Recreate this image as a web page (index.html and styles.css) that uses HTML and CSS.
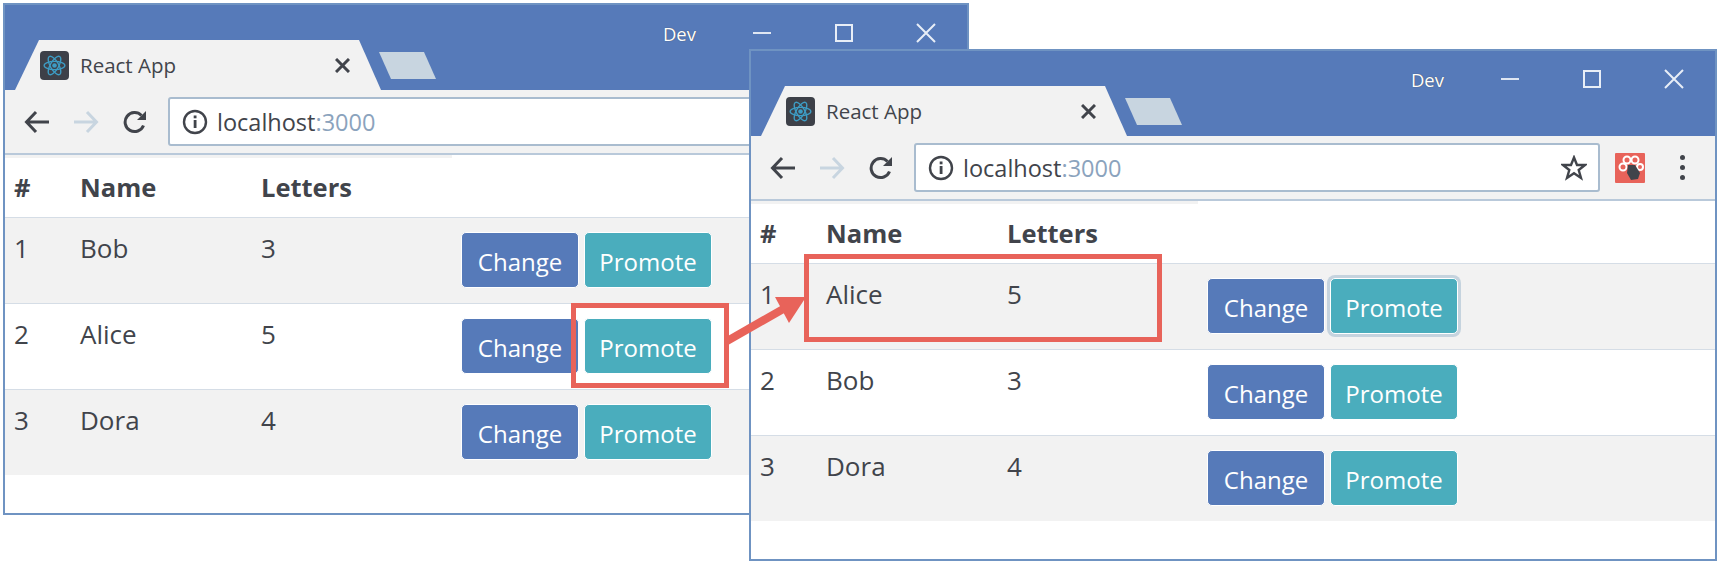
FILE: index.html
```html
<!DOCTYPE html>
<html lang="en">
<head>
    <meta charset="UTF-8">
    <title>React App</title>
    <link rel="stylesheet" href="styles.css">
</head>
<body>
    <!-- Shared icons -->
    <svg class="icon-defs" width="0" height="0">
        <defs>
            <symbol id="atom" viewBox="0 0 28 28">
                <g fill="none" stroke="#3d9cc4" stroke-width="1.3">
                    <ellipse cx="14" cy="14" rx="10" ry="4"/>
                    <ellipse cx="14" cy="14" rx="10" ry="4" transform="rotate(60 14 14)"/>
                    <ellipse cx="14" cy="14" rx="10" ry="4" transform="rotate(120 14 14)"/>
                </g>
                <circle cx="14" cy="14" r="2.2" fill="#3d9cc4"/>
            </symbol>
            <symbol id="arrow" viewBox="0 0 26 24">
                <path d="M25 12H3M12 2L2.500 12L12 22" fill="none" stroke="currentColor" stroke-width="3"/>
            </symbol>
            <symbol id="forward" viewBox="0 0 26 24">
                <path d="M1 12H23M14 2L23.500 12L14 22" fill="none" stroke="currentColor" stroke-width="3"/>
            </symbol>
            <symbol id="reload" viewBox="0 0 26 24">
                <path d="M21.500 15.500A9.500 9.500 0 1 1 19.500 5.500" fill="none" stroke="currentColor" stroke-width="3"/>
                <path d="M24 1V10H15Z" fill="currentColor"/>
            </symbol>
            <symbol id="info" viewBox="0 0 26 26">
                <circle cx="13" cy="13" r="11" fill="none" stroke="currentColor" stroke-width="2.400"/>
                <rect x="11.700" y="11" width="2.800" height="8" fill="currentColor"/>
                <rect x="11.700" y="6.500" width="2.800" height="2.800" fill="currentColor"/>
            </symbol>
            <symbol id="close" viewBox="0 0 15 15">
                <path d="M1 1L14 14M14 1L1 14" fill="none" stroke="currentColor" stroke-width="3"/>
            </symbol>
        </defs>
    </svg>

    <!-- Window before the click -->
    <div class="window window-back">
        <div class="titlebar">
            <div class="tab">
                <svg class="favicon"><use href="#atom"/></svg>
                <span class="tab-title">React App</span>
                <svg class="tab-close"><use href="#close"/></svg>
            </div>
            <div class="new-tab"></div>
            <div class="controls">
                <span class="profile">Dev</span>
                <span class="control"><i class="ctl-min"></i></span>
                <span class="control"><i class="ctl-max"></i></span>
                <span class="control"><svg class="ctl-close" viewBox="0 0 20 20"><path d="M1 1L19 19M19 1L1 19"/></svg></span>
            </div>
        </div>
        <div class="toolbar">
            <svg class="nav-icon"><use href="#arrow"/></svg>
            <svg class="nav-icon nav-forward"><use href="#forward"/></svg>
            <svg class="nav-icon"><use href="#reload"/></svg>
            <div class="address">
                <svg class="info-icon"><use href="#info"/></svg>
                <span class="url">localhost<span class="port">:3000</span></span>
            </div>
        </div>
        <div class="content">
            <table class="people">
                <thead>
                    <tr><th class="col-id">#</th><th class="col-name">Name</th><th class="col-letters">Letters</th><th></th></tr>
                </thead>
                <tbody>
                    <tr><td>1</td><td>Bob</td><td>3</td><td class="cell-actions"><button class="btn btn-change">Change</button><button class="btn btn-promote">Promote</button></td></tr>
                    <tr><td>2</td><td>Alice</td><td>5</td><td class="cell-actions"><button class="btn btn-change">Change</button><button class="btn btn-promote">Promote</button></td></tr>
                    <tr><td>3</td><td>Dora</td><td>4</td><td class="cell-actions"><button class="btn btn-change">Change</button><button class="btn btn-promote">Promote</button></td></tr>
                </tbody>
            </table>
        </div>
    </div>

    <!-- Window after the click -->
    <div class="window window-front">
        <div class="titlebar">
            <div class="tab">
                <svg class="favicon"><use href="#atom"/></svg>
                <span class="tab-title">React App</span>
                <svg class="tab-close"><use href="#close"/></svg>
            </div>
            <div class="new-tab"></div>
            <div class="controls">
                <span class="profile">Dev</span>
                <span class="control"><i class="ctl-min"></i></span>
                <span class="control"><i class="ctl-max"></i></span>
                <span class="control"><svg class="ctl-close" viewBox="0 0 20 20"><path d="M1 1L19 19M19 1L1 19"/></svg></span>
            </div>
        </div>
        <div class="toolbar">
            <svg class="nav-icon"><use href="#arrow"/></svg>
            <svg class="nav-icon nav-forward"><use href="#forward"/></svg>
            <svg class="nav-icon"><use href="#reload"/></svg>
            <div class="address address-short">
                <svg class="info-icon"><use href="#info"/></svg>
                <span class="url">localhost<span class="port">:3000</span></span>
                <svg class="star" viewBox="0 0 26 26"><path d="M13 2.500L16 10H24L17.700 15L20 23L13 18.300L6 23L8.300 15L2 10H10Z"/></svg>
            </div>
            <svg class="extension" viewBox="0 0 30 30">
                <rect width="30" height="30" rx="1" fill="#e8635a"/>
                <g fill="none" stroke="#fff" stroke-width="2">
                    <circle cx="8" cy="14" r="3.500"/>
                    <circle cx="12" cy="7" r="3.500"/>
                    <circle cx="20" cy="7" r="3.500"/>
                    <circle cx="25" cy="14" r="3"/>
                </g>
                <path d="M13 12L20 12L25 20L23 26L16 27L12 20Z" fill="#41444b"/>
            </svg>
            <div class="menu-dots"><i></i><i></i><i></i></div>
        </div>
        <div class="content">
            <table class="people">
                <thead>
                    <tr><th class="col-id">#</th><th class="col-name">Name</th><th class="col-letters">Letters</th><th></th></tr>
                </thead>
                <tbody>
                    <tr><td>1</td><td>Alice</td><td>5</td><td class="cell-actions"><button class="btn btn-change">Change</button><button class="btn btn-promote btn-focus">Promote</button></td></tr>
                    <tr><td>2</td><td>Bob</td><td>3</td><td class="cell-actions"><button class="btn btn-change">Change</button><button class="btn btn-promote">Promote</button></td></tr>
                    <tr><td>3</td><td>Dora</td><td>4</td><td class="cell-actions"><button class="btn btn-change">Change</button><button class="btn btn-promote">Promote</button></td></tr>
                </tbody>
            </table>
        </div>
    </div>

    <!-- Red callouts on top of both windows -->
    <div class="callout callout-button"></div>
    <div class="callout callout-row"></div>
    <svg class="callout-arrow" viewBox="0 0 90 60">
        <path d="M0 47L58 14" fill="none" stroke="#e8635a" stroke-width="8"/>
        <path d="M48 3L79 3L62 29Z" fill="#e8635a"/>
    </svg>
</body>
</html>
```

FILE: styles.css
```css
/* General Styling */
body {
    margin: 0;
    width: 1718px;
    height: 564px;
    position: relative;
    overflow: hidden;
    background: #fff;
    color: #41444b;
    font-family: "Open Sans", sans-serif;
}

.icon-defs {
    position: absolute;
}

/* Browser windows */
.window {
    position: absolute;
    box-sizing: border-box;
    height: 512px;
    display: flex;
    flex-direction: column;
    background: #fff;
    border: 2px solid #6f93c2;
    overflow: hidden;
}

.window-back {
    left: 3px;
    top: 3px;
    width: 966px;
}

.window-front {
    left: 749px;
    top: 49px;
    width: 968px;
}

/* Title bar */
.titlebar {
    height: 85px;
    flex: none;
    display: flex;
    align-items: flex-end;
    padding-left: 10px;
    background: #567ab9;
}

.tab {
    box-sizing: border-box;
    width: 366px;
    height: 50px;
    display: flex;
    align-items: center;
    padding: 0 31px 0 25px;
    background: #f2f2f2;
    clip-path: polygon(0 100%, 24px 0, calc(100% - 22px) 0, 100% 100%);
}

.favicon {
    width: 29px;
    height: 29px;
    flex: none;
    background: #3d4048;
    border-radius: 4px;
}

.tab-title {
    margin-left: 11px;
    font-size: 20.5px;
}

.tab-close {
    width: 15px;
    height: 15px;
    margin-left: auto;
    flex: none;
}

.new-tab {
    width: 57px;
    height: 27px;
    margin: 0 0 11px -2px;
    background: #c8d5e0;
    clip-path: polygon(0 0, 45px 0, 100% 100%, 12px 100%);
}

.controls {
    margin-left: auto;
    align-self: flex-start;
    display: flex;
    align-items: center;
    height: 56px;
    color: #fff;
}

.profile {
    margin-right: 25px;
    font-size: 18.500px;
    text-shadow: 0 0 1px #41444b;
}

.control {
    width: 82px;
    display: flex;
    justify-content: center;
}

.ctl-min {
    width: 18px;
    height: 2px;
    background: #dfe6f2;
}

.ctl-max {
    box-sizing: border-box;
    width: 18px;
    height: 18px;
    border: 2px solid #e8eef7;
}

.ctl-close {
    width: 20px;
    height: 20px;
    fill: none;
    stroke: #e8eef7;
    stroke-width: 2;
}

/* Toolbar */
.toolbar {
    box-sizing: border-box;
    height: 65px;
    flex: none;
    display: flex;
    align-items: center;
    padding: 0 0 0 19px;
    background: #f2f2f2;
    border-bottom: 2px solid #b9c9da;
    color: #41444b;
}

.nav-icon {
    width: 26px;
    height: 24px;
    margin-right: 23px;
    flex: none;
}

.nav-forward {
    color: #c8d5e0;
}

.address {
    box-sizing: border-box;
    width: 900px;
    height: 49px;
    margin-left: -3px;
    flex: none;
    display: flex;
    align-items: center;
    padding: 0 11px 0 12px;
    background: #fff;
    border: 2px solid #a9bccf;
    border-radius: 3px;
}

.address-short {
    width: 686px;
}

.info-icon {
    width: 26px;
    height: 26px;
    flex: none;
}

.url {
    margin-left: 9px;
    font-size: 23.5px;
}

.port {
    color: #8ba3bd;
}

.star {
    width: 26px;
    height: 26px;
    margin-left: auto;
    fill: #fff;
    stroke: #41444b;
    stroke-width: 2.4;
}

.extension {
    width: 30px;
    height: 30px;
    margin-left: 15px;
    flex: none;
}

.menu-dots {
    margin-left: 35px;
    display: flex;
    flex-direction: column;
    gap: 5px;
}

.menu-dots i {
    width: 5px;
    height: 5px;
    border-radius: 50%;
    background: #41444b;
}

/* Table */
.content {
    flex: 1;
}

.people {
    width: 100%;
    table-layout: fixed;
    border-collapse: collapse;
    font-size: 26px;
    line-height: 36px;
}

.people th,
.people td {
    padding: 12px 0 0 9px;
    text-align: left;
    vertical-align: top;
}

.people thead th {
    height: 62px;
    padding-top: 2px;
    box-sizing: border-box;
    vertical-align: middle;
    font-size: 25.500px;
    font-weight: 700;
}

/* Grey band under the toolbar only runs as far as the table's text columns */
.people thead th:not(:last-child) {
    box-shadow: inset 0 3px #f2f2f2;
}

.col-id {
    width: 66px;
}

.col-name {
    width: 181px;
}

.col-letters {
    width: 200px;
}

.people td {
    height: 86px;
    box-sizing: border-box;
    border-top: 1px solid #d5dde6;
}

.people td.cell-actions {
    padding-top: 14px;
}

.people tbody tr:nth-child(odd) {
    background: #f2f2f2;
}

/* Buttons */
.btn {
    box-sizing: border-box;
    height: 56px;
    padding: 3px 0 0;
    vertical-align: top;
    border: 1px solid #fff;
    border-radius: 5px;
    color: #fff;
    font-family: inherit;
    font-size: 24px;
}

.btn-change {
    width: 118px;
    margin-right: 5px;
    background: #567ab9;
}

.btn-promote {
    width: 128px;
    background: #4aadbd;
}

.btn-focus {
    box-shadow: 0 0 0 3px #c5d3de;
}

/* Red callouts */
.callout {
    position: absolute;
    box-sizing: border-box;
    border: 5px solid #e8635a;
}

.callout-button {
    left: 571px;
    top: 303px;
    width: 158px;
    height: 85px;
}

.callout-row {
    left: 804px;
    top: 254px;
    width: 358px;
    height: 88px;
}

.callout-arrow {
    position: absolute;
    left: 727px;
    top: 294px;
    width: 90px;
    height: 60px;
}
```
